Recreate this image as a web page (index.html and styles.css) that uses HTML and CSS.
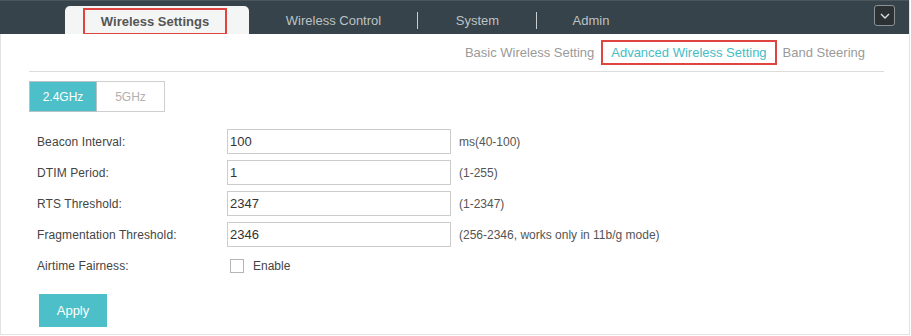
FILE: index.html
```html
<!DOCTYPE html>
<html lang="en">
<head>
    <meta charset="UTF-8">
    <title>Advanced Wireless Setting</title>
    <link rel="stylesheet" href="styles.css">
</head>
<body>
    <div class="frame">
        <!-- Top Navigation -->
        <div class="topbar">
            <div class="nav-item active"><span class="mark">Wireless Settings</span></div>
            <div class="nav-item w2">Wireless Control</div>
            <div class="nav-item w3">System</div>
            <div class="nav-item w4 last">Admin</div>
            <div class="menu-btn">
                <svg width="10" height="6" viewBox="0 0 10 6"><path d="M1 1 L5 5 L9 1" fill="none" stroke="#ddd" stroke-width="1.4"/></svg>
            </div>
        </div>

        <!-- Sub Navigation -->
        <div class="subnav">
            <a href="#">Basic Wireless Setting</a>
            <a href="#" class="current">Advanced Wireless Setting</a>
            <a href="#">Band Steering</a>
        </div>

        <div class="content">
            <div class="band-tabs">
                <div class="band on">2.4GHz</div>
                <div class="band">5GHz</div>
            </div>

            <div class="form">
                <div class="row">
                    <label>Beacon Interval:</label>
                    <input type="text" value="100">
                    <span class="hint">ms(40-100)</span>
                </div>
                <div class="row">
                    <label>DTIM Period:</label>
                    <input type="text" value="1">
                    <span class="hint">(1-255)</span>
                </div>
                <div class="row">
                    <label>RTS Threshold:</label>
                    <input type="text" value="2347">
                    <span class="hint">(1-2347)</span>
                </div>
                <div class="row">
                    <label>Fragmentation Threshold:</label>
                    <input type="text" value="2346">
                    <span class="hint">(256-2346, works only in 11b/g mode)</span>
                </div>
                <div class="row">
                    <label>Airtime Fairness:</label>
                    <span class="check"></span>
                    <span class="check-label">Enable</span>
                </div>
            </div>

            <button class="btn">Apply</button>
        </div>
    </div>
</body>
</html>
```

FILE: styles.css
```css
/* General Reset */
* {
    box-sizing: border-box;
    margin: 0;
    padding: 0;
    font-family: "Liberation Sans", Arial, sans-serif;
}

body {
    background: #fff;
}

/* Outer frame */
.frame {
    width: 910px;
    height: 335px;
    border-left: 1px solid #e2e2e2;
    border-right: 1px solid #e2e2e2;
    border-bottom: 1px solid #e2e2e2;
}

/* Top Navigation Bar */
.topbar {
    display: flex;
    align-items: flex-end;
    height: 34px;
    background: #36434a;
    border-top: 1px solid #4a565c;
    margin-left: -1px;
    padding-left: 65px;
}

.nav-item {
    height: 28px;
    display: flex;
    align-items: center;
    justify-content: center;
    font-size: 13px;
    color: #bcc2c5;
    position: relative;
}

.nav-item.w2 { width: 169px; }
.nav-item.w3 { width: 119px; }
.nav-item.w4 { width: 108px; }

.nav-item.w2::after,
.nav-item.w3::after {
    content: "";
    position: absolute;
    right: 0;
    top: 6px;
    height: 17px;
    border-right: 1px solid #c8cdd0;
}

.nav-item.active {
    width: 184px;
    background: #f4f6f6;
    border-radius: 5px 5px 0 0;
    color: #555;
    font-weight: bold;
    padding-top: 2px;
}

.mark {
    display: flex;
    align-items: center;
    justify-content: center;
    width: 144px;
    height: 26px;
    margin-left: -4px;
    border: 2px solid #e0443e;
    border-bottom-width: 1px;
}

.menu-btn {
    margin-left: auto;
    margin-right: 14px;
    align-self: flex-start;
    margin-top: 4px;
    width: 21px;
    height: 21px;
    border: 1px solid #8a9296;
    border-radius: 3px;
    background: #2c3134;
    display: flex;
    align-items: center;
    justify-content: center;
}

/* Sub Navigation */
.subnav {
    display: flex;
    justify-content: flex-end;
    align-items: center;
    height: 38px;
    margin: 0 25px 0 28px;
    border-bottom: 1px solid #dcdcdc;
    padding-right: 19px;
}

.subnav a {
    font-size: 13px;
    color: #9a9a9a;
    text-decoration: none;
    line-height: 21px;
}

.subnav a.current {
    color: #44bdc6;
    border: 2px solid #e0443e;
    padding: 0 8px;
    margin: 0 6px 0 7px;
}

/* Content */
.content {
    padding: 9px 0 0 28px;
}

.band-tabs {
    display: flex;
    height: 31px;
}

.band {
    width: 68px;
    display: flex;
    align-items: center;
    justify-content: center;
    font-size: 12px;
    color: #b0b0b0;
    border: 1px solid #cfcfcf;
    border-left: none;
}

.band.on {
    width: 68px;
    background: #4cbfc9;
    border: 1px solid #b9c3c5;
    color: #fff;
}

/* Form rows */
.form {
    padding-top: 14px;
}

.row {
    display: flex;
    align-items: center;
    height: 31px;
}

.row label {
    width: 198px;
    padding-left: 8px;
    font-size: 12px;
    letter-spacing: 0.1px;
    color: #444;
}

.row input {
    width: 224px;
    height: 25px;
    border: 1px solid #cccccc;
    padding-left: 2px;
    font-size: 13px;
    color: #333;
}

.hint {
    margin-left: 8px;
    font-size: 12px;
    color: #555;
}

.check {
    width: 14px;
    height: 14px;
    border: 1px solid #b5b5b5;
    margin-left: 3px;
}

.check-label {
    margin-left: 9px;
    font-size: 12px;
    color: #444;
}

/* Button */
.btn {
    margin: 13px 0 0 10px;
    width: 68px;
    height: 33px;
    background: #4cbfc9;
    border: none;
    color: #fff;
    font-size: 13px;
    cursor: pointer;
}
```
